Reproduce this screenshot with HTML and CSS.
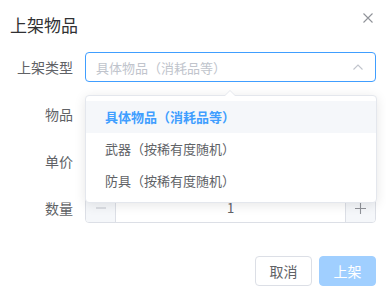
FILE: index.html
```html
<!DOCTYPE html>
<html lang="zh-CN">
<head>
    <meta charset="UTF-8">
    <meta name="viewport" content="width=device-width, initial-scale=1.0">
    <title>上架物品</title>
    <link rel="stylesheet" href="styles.css">
</head>
<body>
    <div class="dialog">
        <header class="dialog-header">
            <span class="dialog-title">上架物品</span>
            <button class="close-btn" aria-label="关闭">
                <svg width="10" height="10" viewBox="0 0 10 10"><path d="M0.5 0.5 L9.5 9.5 M9.5 0.5 L0.5 9.5" stroke="#909399" stroke-width="1.1" fill="none"/></svg>
            </button>
        </header>

        <form class="dialog-body">
            <div class="form-row">
                <label class="form-label">上架类型</label>
                <div class="select">
                    <div class="input is-focus">
                        <span class="placeholder">具体物品（消耗品等）</span>
                        <svg class="chevron" width="10" height="6" viewBox="0 0 10 6"><polyline points="0.5,5.5 5,1 9.5,5.5" stroke="#c0c4cc" stroke-width="1.1" fill="none"/></svg>
                    </div>
                    <div class="dropdown">
                        <span class="dropdown-arrow"></span>
                        <ul>
                            <li class="selected hover">具体物品（消耗品等）</li>
                            <li>武器（按稀有度随机）</li>
                            <li>防具（按稀有度随机）</li>
                        </ul>
                    </div>
                </div>
            </div>

            <div class="form-row">
                <label class="form-label">物品</label>
                <div class="input"></div>
            </div>

            <div class="form-row">
                <label class="form-label">单价</label>
                <div class="input"></div>
            </div>

            <div class="form-row">
                <label class="form-label">数量</label>
                <div class="input-number">
                    <span class="num-btn minus">
                        <svg width="10" height="10" viewBox="0 0 10 10"><path d="M0 5 H10" stroke="#c0c4cc" stroke-width="1.1"/></svg>
                    </span>
                    <span class="num-value">1</span>
                    <span class="num-btn plus">
                        <svg width="11" height="11" viewBox="0 0 11 11"><path d="M0 5.5 H11 M5.5 0 V11" stroke="#909399" stroke-width="1.1"/></svg>
                    </span>
                </div>
            </div>
        </form>

        <footer class="dialog-footer">
            <button class="btn">取消</button>
            <button class="btn btn-primary is-disabled">上架</button>
        </footer>
    </div>
</body>
</html>
```

FILE: styles.css
```css
        /* dialog: 上架物品 */
        :root {
            --primary: #409eff;
            --primary-light: #a0cfff;
            --border: #dcdfe6;
            --text-main: #303133;
            --text-regular: #606266;
            --placeholder: #c0c4cc;
        }

        * {
            box-sizing: border-box;
        }

        body {
            margin: 0;
            background: #ffffff;
            font-family: "Noto Sans CJK SC", "Noto Sans", sans-serif;
            color: var(--text-regular);
        }

        .dialog {
            width: 386px;
            height: 300px;
            padding: 0 10px;
        }

        .dialog-header {
            display: flex;
            justify-content: space-between;
            align-items: flex-start;
            padding-top: 14px;
            margin-bottom: 16px;
        }

        .dialog-title {
            font-size: 17px;
            line-height: 22px;
            color: var(--text-main);
        }

        .close-btn {
            border: none;
            background: none;
            padding: 0;
            margin: -1px 3px 0 0;
            width: 10px;
            height: 10px;
            cursor: pointer;
        }

        .close-btn svg {
            display: block;
        }

        .form-row {
            display: flex;
            align-items: center;
            height: 30px;
            margin-bottom: 17px;
        }

        .form-label {
            width: 75px;
            padding-right: 12px;
            text-align: right;
            font-size: 14px;
            color: var(--text-regular);
        }

        .input {
            flex: 1;
            height: 30px;
            border: 1px solid var(--border);
            border-radius: 4px;
            display: flex;
            align-items: center;
            padding: 0 12px 0 10px;
            font-size: 13px;
        }

        .input.is-focus {
            border-color: var(--primary);
        }

        .select {
            flex: 1;
            position: relative;
            display: flex;
        }

        .placeholder {
            flex: 1;
            color: var(--placeholder);
        }

        .chevron {
            display: block;
        }

        /* popper under the select */
        .dropdown {
            position: absolute;
            top: 43px;
            left: 0;
            width: 292px;
            background: #fff;
            border: 1px solid #e4e7ed;
            border-radius: 4px;
            box-shadow: 0 2px 12px rgba(0, 0, 0, 0.1);
            z-index: 10;
        }

        .dropdown-arrow {
            position: absolute;
            top: -6px;
            left: 138px;
            width: 0;
            height: 0;
            border: 6px solid transparent;
            border-top: none;
            border-bottom-color: #e4e7ed;
        }

        .dropdown-arrow::after {
            content: "";
            position: absolute;
            top: 1px;
            left: -6px;
            border: 6px solid transparent;
            border-top: none;
            border-bottom-color: #fff;
        }

        .dropdown ul {
            list-style: none;
            margin: 0;
            padding: 5px 0;
        }

        .dropdown li {
            height: 32px;
            line-height: 32px;
            padding: 0 19px;
            font-size: 13px;
            color: var(--text-regular);
        }

        .dropdown li.hover {
            background: #f5f7fa;
        }

        .dropdown li.selected {
            color: var(--primary);
            font-weight: bold;
        }

        .input-number {
            flex: 1;
            height: 30px;
            display: flex;
            border: 1px solid var(--border);
            border-radius: 4px;
            overflow: hidden;
        }

        .num-btn {
            width: 30px;
            background: #f5f7fa;
            display: flex;
            align-items: center;
            justify-content: center;
        }

        .num-btn.minus {
            border-right: 1px solid var(--border);
        }

        .num-btn.plus {
            border-left: 1px solid var(--border);
        }

        .num-value {
            flex: 1;
            text-align: center;
            line-height: 28px;
            font-size: 13px;
            color: var(--text-regular);
        }

        .dialog-footer {
            display: flex;
            justify-content: flex-end;
            gap: 7px;
            margin-top: 33px;
        }

        .btn {
            width: 57px;
            height: 30px;
            border: 1px solid var(--border);
            border-radius: 4px;
            background: #fff;
            color: var(--text-regular);
            font-family: inherit;
            font-size: 14px;
            padding: 0;
            cursor: pointer;
        }

        .btn-primary {
            color: #fff;
            background: var(--primary);
            border-color: var(--primary);
        }

        .btn-primary.is-disabled {
            background: var(--primary-light);
            border-color: var(--primary-light);
            cursor: not-allowed;
        }
```
